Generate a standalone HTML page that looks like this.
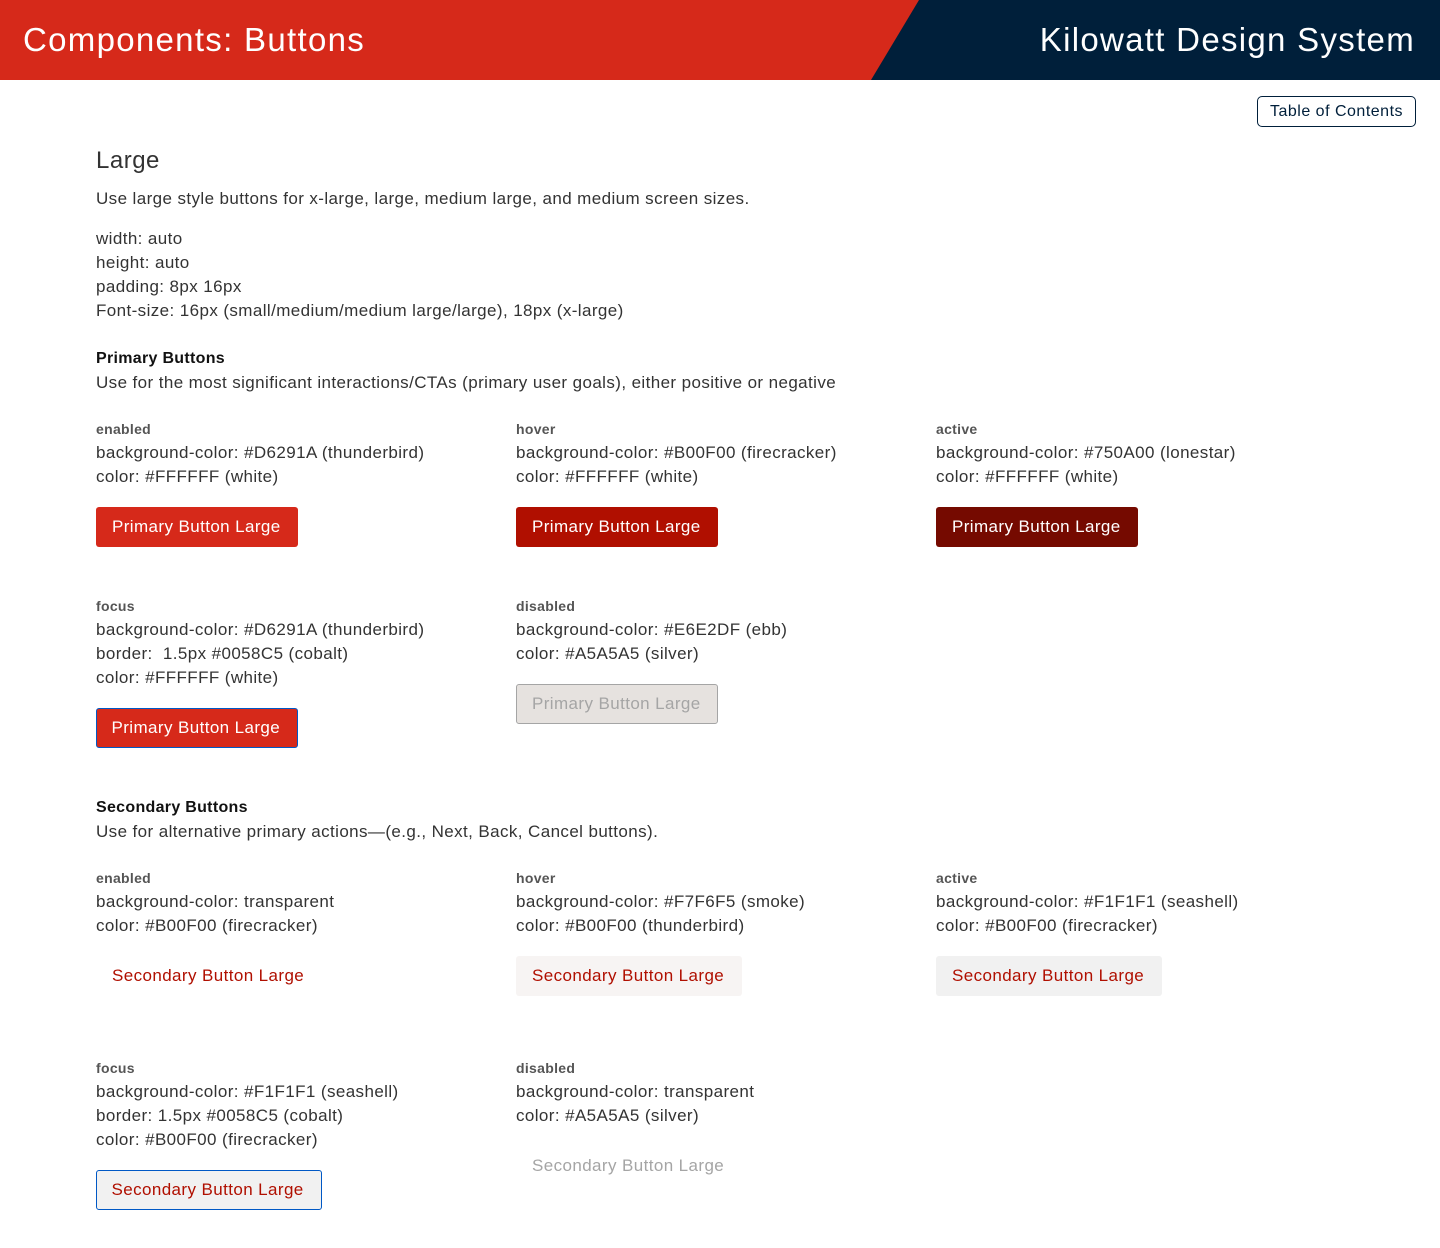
<!DOCTYPE html>
<html><head><meta charset="utf-8"><style>
*{margin:0;padding:0;box-sizing:border-box}
body{width:1440px;height:1248px;position:relative;background:#fff;font-family:"Liberation Sans",Arial,sans-serif;color:#222;overflow:hidden}
.a{position:absolute;white-space:nowrap}
.t{font-size:17px;line-height:24px;color:#333;letter-spacing:0.4px}
.l{font-size:14px;line-height:18px;font-weight:bold;color:#555;letter-spacing:0.3px}
.h{font-size:16px;line-height:24px;font-weight:bold;color:#111;letter-spacing:0.3px}
.b{position:absolute;height:40px;font-size:17px;display:flex;align-items:center;padding-left:16px;border-radius:3px;letter-spacing:0.4px}
.p{color:#fff}
.s{color:#B00F00}
</style></head><body>
<div class="a" style="left:0;top:0;width:1440px;height:80px;background:#D6291A"></div>
<svg class="a" style="left:0;top:0" width="1440" height="80"><polygon points="919,0 1440,0 1440,80 871,80" fill="#001F3A"/></svg>
<div class="a" style="left:23px;top:18px;font-size:33px;line-height:44px;color:#fff;letter-spacing:1.3px">Components: Buttons</div>
<div class="a" style="right:25px;top:18px;font-size:33px;line-height:44px;color:#fff;letter-spacing:1.3px">Kilowatt Design System</div>
<div class="a" style="left:1257px;top:96px;width:159px;height:31px;border:1px solid #001F3A;border-radius:5px;font-size:16px;line-height:29px;text-align:center;color:#001F3A;letter-spacing:0.5px">Table of Contents</div>

<div class="a" style="left:96px;top:146px;font-size:24px;line-height:30px;color:#333;letter-spacing:0.5px">Large</div>
<div class="a t" style="left:96px;top:187px">Use large style buttons for x-large, large, medium large, and medium screen sizes.</div>
<div class="a t" style="left:96px;top:227px">width: auto<br>height: auto<br>padding: 8px 16px<br>Font-size: 16px (small/medium/medium large/large), 18px (x-large)</div>

<div class="a h" style="left:96px;top:347px">Primary Buttons</div>
<div class="a t" style="left:96px;top:371px">Use for the most significant interactions/CTAs (primary user goals), either positive or negative</div>

<div class="a l" style="left:96px;top:420px">enabled</div>
<div class="a t" style="left:96px;top:441px">background-color: #D6291A (thunderbird)<br>color: #FFFFFF (white)</div>
<div class="b p" style="left:96px;top:507px;width:202px;background:#D6291A">Primary Button Large</div>

<div class="a l" style="left:516px;top:420px">hover</div>
<div class="a t" style="left:516px;top:441px">background-color: #B00F00 (firecracker)<br>color: #FFFFFF (white)</div>
<div class="b p" style="left:516px;top:507px;width:202px;background:#B00F00">Primary Button Large</div>

<div class="a l" style="left:936px;top:420px">active</div>
<div class="a t" style="left:936px;top:441px">background-color: #750A00 (lonestar)<br>color: #FFFFFF (white)</div>
<div class="b p" style="left:936px;top:507px;width:202px;background:#750A00">Primary Button Large</div>

<div class="a l" style="left:96px;top:597px">focus</div>
<div class="a t" style="left:96px;top:618px">background-color: #D6291A (thunderbird)<br>border:&nbsp; 1.5px #0058C5 (cobalt)<br>color: #FFFFFF (white)</div>
<div class="b p" style="left:96px;top:708px;width:202px;background:#D6291A;border:1.5px solid #0058C5;padding-left:14.5px">Primary Button Large</div>

<div class="a l" style="left:516px;top:597px">disabled</div>
<div class="a t" style="left:516px;top:618px">background-color: #E6E2DF (ebb)<br>color: #A5A5A5 (silver)</div>
<div class="b" style="left:516px;top:684px;width:202px;background:#E6E2DF;border:1px solid #A5A5A5;color:#A5A5A5;padding-left:15px">Primary Button Large</div>

<div class="a h" style="left:96px;top:796px">Secondary Buttons</div>
<div class="a t" style="left:96px;top:820px">Use for alternative primary actions—(e.g., Next, Back, Cancel buttons).</div>

<div class="a l" style="left:96px;top:869px">enabled</div>
<div class="a t" style="left:96px;top:890px">background-color: transparent<br>color: #B00F00 (firecracker)</div>
<div class="b s" style="left:96px;top:956px;width:226px">Secondary Button Large</div>

<div class="a l" style="left:516px;top:869px">hover</div>
<div class="a t" style="left:516px;top:890px">background-color: #F7F6F5 (smoke)<br>color: #B00F00 (thunderbird)</div>
<div class="b s" style="left:516px;top:956px;width:226px;background:#F7F4F3">Secondary Button Large</div>

<div class="a l" style="left:936px;top:869px">active</div>
<div class="a t" style="left:936px;top:890px">background-color: #F1F1F1 (seashell)<br>color: #B00F00 (firecracker)</div>
<div class="b s" style="left:936px;top:956px;width:226px;background:#F1F1F1">Secondary Button Large</div>

<div class="a l" style="left:96px;top:1059px">focus</div>
<div class="a t" style="left:96px;top:1080px">background-color: #F1F1F1 (seashell)<br>border: 1.5px #0058C5 (cobalt)<br>color: #B00F00 (firecracker)</div>
<div class="b s" style="left:96px;top:1170px;width:226px;background:#F1F1F1;border:1.5px solid #0058C5;padding-left:14.5px;border-radius:3px">Secondary Button Large</div>

<div class="a l" style="left:516px;top:1059px">disabled</div>
<div class="a t" style="left:516px;top:1080px">background-color: transparent<br>color: #A5A5A5 (silver)</div>
<div class="b" style="left:516px;top:1146px;width:226px;color:#A5A5A5">Secondary Button Large</div>
</body></html>
